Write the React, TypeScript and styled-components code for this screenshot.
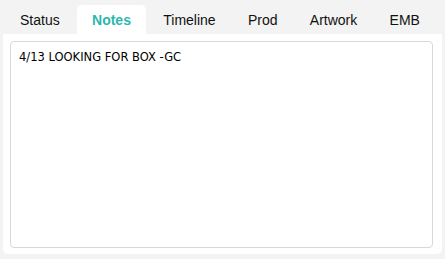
import React, { useState } from "react";
import styled, { createGlobalStyle } from "styled-components";

const Global = createGlobalStyle`
  html, body { margin: 0; padding: 0; background: #f3f3f3; }
  * { box-sizing: border-box; }
`;

const Wrapper = styled.div`
  width: 445px;
  height: 259px;
  padding: 5px 3px 5px 3px;
  display: flex;
  flex-direction: column;
  background: #f3f3f3;
`;

const TabBar = styled.div`
  display: flex;
  justify-content: space-between;
  padding: 0 7px 0 2px;
  height: 29px;
`;

const Tab = styled.button<{ $active?: boolean }>`
  border: none;
  margin: 0;
  padding: 1px 15px 0;
  height: 29px;
  background: ${(p) => (p.$active ? "#ffffff" : "transparent")};
  border-radius: 5px 5px 0 0;
  font-family: "Liberation Sans", Arial, sans-serif;
  font-size: 14px;
  font-weight: ${(p) => (p.$active ? 700 : 400)};
  color: ${(p) => (p.$active ? "#2bb8ad" : "#111111")};
  cursor: pointer;
  line-height: 16px;
`;

const Panel = styled.div`
  flex: 1;
  background: #ffffff;
  border-radius: 0 0 5px 5px;
  padding: 7px 9px 6px 7px;
  display: flex;
`;

const NotesArea = styled.textarea`
  flex: 1;
  resize: none;
  border: 1px solid #d8d8d8;
  border-radius: 4px;
  padding: 7px 8px;
  font-family: "DejaVu Sans Condensed", "DejaVu Sans", sans-serif;
  font-size: 12.8px;
  line-height: 16px;
  color: #000000;
  background: #ffffff;
  outline: none;
`;

const tabs = ["Status", "Notes", "Timeline", "Prod", "Artwork", "EMB"];

export default function App() {
  const [active, setActive] = useState("Notes");
  return (
    <>
      <Global />
      <Wrapper>
        <TabBar>
          {tabs.map((t) => (
            <Tab key={t} $active={t === active} onClick={() => setActive(t)}>
              {t}
            </Tab>
          ))}
        </TabBar>
        <Panel>
          <NotesArea defaultValue="4/13 LOOKING FOR BOX -GC" />
        </Panel>
      </Wrapper>
    </>
  );
}
